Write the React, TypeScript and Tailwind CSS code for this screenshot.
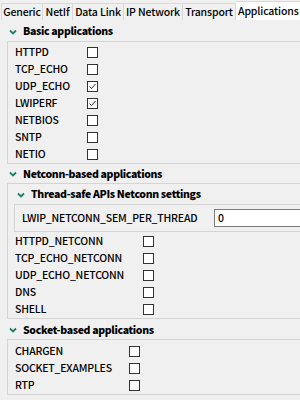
import React from "react";

const font = { fontFamily: '"Noto Sans CJK SC", "Noto Sans", sans-serif' };

function Chevron() {
  return (
    <svg width="8" height="6" viewBox="0 0 8 6" className="shrink-0">
      <path d="M1 1.5 L4 4.5 L7 1.5" fill="none" stroke="#1d7f6c" strokeWidth="1.8" />
    </svg>
  );
}

function Box({ checked }: { checked?: boolean }) {
  return (
    <div className="w-[11px] h-[11px] border border-[#333333] bg-white shrink-0 flex items-center justify-center">
      {checked && (
        <svg width="9" height="9" viewBox="0 0 9 9">
          <path d="M1.5 4.5 L3.5 6.5 L7.5 2" fill="none" stroke="#333333" strokeWidth="1" />
        </svg>
      )}
    </div>
  );
}

function Row({ label, w, checked }: { label: string; w: string; checked?: boolean }) {
  return (
    <div className="h-[17px] flex items-center pl-[7px]">
      <div className={`${w} text-[10.5px] font-medium tracking-[-0.2px] leading-none text-black whitespace-nowrap`}>{label}</div>
      <Box checked={checked} />
    </div>
  );
}

function Header({ title, h, pl }: { title: string; h: string; pl: string }) {
  return (
    <div className={`flex items-center gap-[6px] ${h} ${pl}`}>
      <Chevron />
      <span className="text-[10.5px] tracking-[-0.35px] font-extrabold leading-none text-black whitespace-nowrap">{title}</span>
    </div>
  );
}

export default function App() {
  const tabs = ["Generic", "NetIf", "Data Link", "IP Network", "Transport"];
  const tabW = ["w-[42px]", "w-[30px]", "w-[51px]", "w-[59px]", "w-[53px]"];
  return (
    <div className="w-[300px] h-[400px] overflow-hidden bg-[#f0f0f0]" style={font}>
      <div className="w-[320px]">
        {/* tabs */}
        <div className="flex items-end h-[20px] pl-[1px]">
          {tabs.map((t, i) => (
            <div
              key={t}
              className={`${tabW[i]} h-[17px] border border-b-0 border-[#d9d9d9] ${i > 0 ? "border-l-0" : ""} bg-[#f0f0f0] flex items-center justify-center text-[10.5px] font-medium tracking-[-0.15px] leading-none text-black whitespace-nowrap`}
            >
              {t}
            </div>
          ))}
          <div className="w-[66px] h-[19px] bg-white border border-b-0 border-l-0 border-[#d9d9d9] flex items-center pl-[2px] text-[10.5px] font-medium tracking-[-0.15px] leading-none text-black whitespace-nowrap">
            Applications
          </div>
          <div className="flex-1" />
        </div>

        {/* Basic */}
        <Header title="Basic applications" h="h-[21px] pt-[2px]" pl="pl-[9px]" />
        <div className="ml-[7px] border border-[#d4d4d4] pt-[2px]">
          <Row label="HTTPD" w="w-[72px]" />
          <Row label="TCP_ECHO" w="w-[72px]" />
          <Row label="UDP_ECHO" w="w-[72px]" checked />
          <Row label="LWIPERF" w="w-[72px]" checked />
          <Row label="NETBIOS" w="w-[72px]" />
          <Row label="SNTP" w="w-[72px]" />
          <Row label="NETIO" w="w-[72px]" />
        </div>

        {/* Netconn */}
        <Header title="Netconn-based applications" h="h-[19px] pt-[1px]" pl="pl-[9px]" />
        <div className="ml-[7px] border border-[#d4d4d4]">
          <Header title="Thread-safe APIs Netconn settings" h="h-[20px] pt-[1px]" pl="pl-[9px]" />
          <div className="ml-[6px] border border-[#d4d4d4] py-[4px] flex items-center">
            <div className="w-[199px] pl-[7px] text-[10.5px] font-medium tracking-[-0.2px] leading-none text-black whitespace-nowrap">LWIP_NETCONN_SEM_PER_THREAD</div>
            <div className="flex-1 h-[18px] bg-white border border-[#7a7a7a] flex items-center pl-[3px] text-[10.5px] font-medium leading-none text-black">
              0
            </div>
          </div>
          <div className="pt-[1px]">
            <Row label="HTTPD_NETCONN" w="w-[128px]" />
            <Row label="TCP_ECHO_NETCONN" w="w-[128px]" />
            <Row label="UDP_ECHO_NETCONN" w="w-[128px]" />
            <Row label="DNS" w="w-[128px]" />
            <Row label="SHELL" w="w-[128px]" />
          </div>
        </div>

        {/* Socket */}
        <Header title="Socket-based applications" h="h-[20px] pt-[2px]" pl="pl-[9px]" />
        <div className="ml-[7px] border border-[#d4d4d4] pt-[3px]">
          <Row label="CHARGEN" w="w-[114px]" />
          <Row label="SOCKET_EXAMPLES" w="w-[114px]" />
          <Row label="RTP" w="w-[114px]" />
        </div>
      </div>
    </div>
  );
}
